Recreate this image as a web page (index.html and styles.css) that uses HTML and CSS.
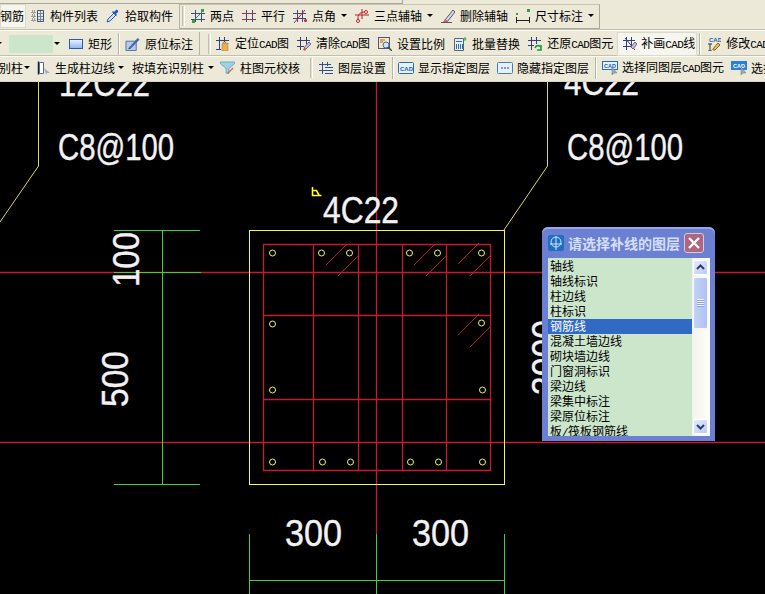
FILE: index.html
```html
<!DOCTYPE html>
<html lang="zh">
<head>
<meta charset="utf-8">
<title>CAD</title>
<link rel="stylesheet" href="styles.css">
</head>
<body>
<div class="page">
  <header class="bars">
    <div class="strip"></div>
    <div class="row row1">
      <div class="tb tb-first">
        <span class="tool on first">钢筋</span>
        <span class="tool"><svg class="ic" viewBox="0 0 14 14"><path d="M1 2h3v2H1zM1 6h3v2H1zM1 10h3v2H1z" fill="none" stroke="#456" stroke-dasharray="1 1"/><path d="M6.500 1.500h6v11h-6z" fill="#dfe8f2" stroke="#456"/><path d="M7 4.500h5M7 7.500h5M7 10.500h5M9.500 2v10" stroke="#789"/></svg>构件列表</span>
        <span class="tool pick"><svg class="ic" viewBox="0 0 14 14"><path d="M1 13l1-3 6-6 2 2-6 6z" fill="#cfe0f8" stroke="#2a5bb0"/><path d="M8 3l2-2c1-1 3 1 2 2l-2 2 1 1-1 1-4-4 1-1z" fill="#2458b8"/></svg>拾取构件</span>
      </div>
      <div class="tb tb-main">
        <i class="grip"></i>
        <span class="tool"><svg class="ic" viewBox="0 0 14 14"><path d="M4.500 1v12M10.500 1v12M0 4.500h14M0 10.500h14" stroke="#3b4a8c"/><path d="M1 13L13 1" stroke="#2f8a2f"/><path d="M1 11h3v3H1zM10 0h3v3h-3z" fill="#38a038"/></svg>两点</span>
        <span class="tool"><svg class="ic" viewBox="0 0 14 14"><path d="M4.500 1v12M10.500 1v12" stroke="#3b4a8c"/><path d="M0 4.500h14M0 10.500h14" stroke="#a83048"/></svg>平行</span>
        <span class="tool"><svg class="ic" viewBox="0 0 14 14"><path d="M4.500 1v12M9.500 1v12M0 4.500h13M0 9.500h13" stroke="#3b4a8c"/><path d="M1 14L12 1" stroke="#c02030"/><circle cx="12.500" cy="11.500" r="1.500" fill="#c02030"/></svg>点角<i class="arr"></i></span>
        <span class="tool"><svg class="ic" viewBox="0 0 14 14"><path d="M3 13V8.500C3 5 6 3 10 3M7 0v10M0 6h14" fill="none" stroke="#b82030"/><circle cx="3" cy="12" r="1.500" fill="#fff" stroke="#b82030"/><circle cx="11" cy="3" r="1.500" fill="#fff" stroke="#b82030"/></svg>三点辅轴<i class="arr"></i></span>
        <span class="tool"><svg class="ic" viewBox="0 0 14 14"><path d="M0 13.500h11" stroke="#556"/><path d="M4 11L12 1l2 2-8 10z" fill="#d8d8e8" stroke="#556"/><path d="M2 13l2-3 3 2-1 1z" fill="#c86a6a"/></svg>删除辅轴</span>
        <span class="tool"><svg class="ic" viewBox="0 0 14 14"><path d="M.5 8v6M13.500 8v6M0 11.500h14" stroke="#222"/><path d="M11 0h3v3h-3zM0 4h2v2H0z" fill="#35a035"/></svg>尺寸标注<i class="arr"></i></span>
      </div>
    </div>
    <div class="row row2">
      <div class="tb tb-a">
        <i class="arr arr-cut"></i>
        <span class="swatch"><i class="arr"></i></span>
        <span class="tool"><svg class="ic" viewBox="0 0 14 14"><defs><linearGradient id="rg" x1="0" y1="0" x2="0" y2="1"><stop offset="0" stop-color="#eef4ff"/><stop offset="1" stop-color="#8db4ee"/></linearGradient></defs><rect x="0.500" y="2.500" width="13" height="9" fill="url(#rg)" stroke="#2a5bb0"/></svg>矩形</span>
        <i class="vsep"></i>
        <span class="tool wide"><svg class="ic ic15" viewBox="0 0 15 15"><path d="M.5 4.500h11v10H.5z" fill="#b8cbe8" stroke="#4a6fa8"/><path d="M4 11L13 1l2 2-9 9z" fill="#3f6db0"/><path d="M3 13l1-2 2 1z" fill="#223"/></svg>原位标注</span>
      </div>
      <div class="tb tb-b">
        <i class="grip"></i>
        <span class="tool"><svg class="ic" viewBox="0 0 14 14"><path d="M3.500 0v12M8.500 0v5M0 3.500h13M0 12.500h5" stroke="#2f3f80"/><path d="M6 14V7h1V5h1v2h1V5h1v2h1V6h1v8z" fill="#e8b050" stroke="#a87020" stroke-width=".5"/></svg><span>定位<span class="lat">CAD</span>图</span></span>
        <span class="tool"><svg class="ic" viewBox="0 0 14 14"><path d="M3.500 0v13M9.500 0v7M0 3.500h13M0 9.500h7" stroke="#2f3f80"/><path d="M7 11l5-6 2 2-5 5z" fill="#cfc4d8" stroke="#667"/><path d="M6 13l1-2 2 1-1 2z" fill="#c85050"/></svg><span>清除<span class="lat">CAD</span>图</span></span>
        <span class="tool"><svg class="ic" viewBox="0 0 14 14"><rect x="0.500" y="0.500" width="11" height="11" fill="#f4e8c0" stroke="#557"/><path d="M2 3h5M2 5h3" stroke="#c06030"/><circle cx="8" cy="8" r="3" fill="#cfe4fa" stroke="#3a6fb0"/><path d="M10 10l4 4" stroke="#445" stroke-width="1.500"/></svg>设置比例</span>
        <span class="tool"><svg class="ic" viewBox="0 0 14 14"><path d="M1.500 1.500h9v12h-9z" fill="#e8eef0" stroke="#567"/><path d="M3 4h6v1H3zM3 7h1v5H3zM5 7h1v5H5zM7 7h1v5H7zM9 7h1v5H9z" fill="#27a"/><path d="M12 0v4M10.500 2h3" stroke="#3a3"/></svg>批量替换</span>
        <span class="tool"><svg class="ic" viewBox="0 0 14 14"><path d="M3.500 0v13M8.500 0v7M0 3.500h13M0 8.500h6" stroke="#2f3f80"/><path d="M7 11c1-3 4-3 6-1v-2v5h-4" fill="none" stroke="#1f9a3a" stroke-width="1.600"/></svg><span>还原<span class="lat">CAD</span>图元</span></span>
        <span class="tool on hl"><svg class="ic" viewBox="0 0 14 14"><path d="M3.500 0v13M8.500 0v10M0 3.500h12M0 9.500h9" stroke="#2f3f80"/><path d="M2 1l10 12" stroke="#2f3f80"/><path d="M8 10l4-5 2 2-4 5z" fill="#cfc4d8" stroke="#667"/></svg><span>补画<span class="lat">CAD</span>线</span></span>
        <i class="vsep vsep2"></i>
        <span class="tool"><svg class="ic" viewBox="0 0 14 14"><path d="M1 7h4M1 14h4M3 7v7" stroke="#333"/><path d="M6 12l5-6 2 2-5 5H6z" fill="#f0c850" stroke="#806020"/><text class="mini" x="2" y="5">CAD</text></svg><span>修改<span class="lat">CAD</span>图</span></span>
      </div>
    </div>
    <div class="row row3">
      <div class="tb tb-c">
        <span class="tool first cut">别柱<i class="arr arr3"></i></span>
        <span class="tool"><svg class="ic" viewBox="0 0 14 14"><path d="M1.500 .5v13" stroke="#123" stroke-width="1.500"/><path d="M2.500 1.500h4v11h-4z" fill="#fff" stroke="#56a"/><path d="M7 7l6 5-3 0-1 2z" fill="#aab"/></svg>生成柱边线<i class="arr arr3"></i></span>
        <span class="tool txt">按填充识别柱<i class="arr"></i></span>
        <span class="tool check"><svg class="ic ic15" viewBox="0 0 15 15"><path d="M0 1h15v2L9 8v5H6V8L0 3z" fill="#9fd0e8" stroke="#4a90b0" stroke-width=".7"/><path d="M7 13l6-6 1 1-6 6z" fill="#c87040"/></svg>柱图元校核</span>
      </div>
      <div class="tb tb-d">
        <i class="grip"></i>
        <span class="tool"><svg class="ic" viewBox="0 0 14 14"><path d="M3.500 1v12M8.500 1v4M0 3.500h12M0 9.500h14M6 6.500h8M6 12.500h8" stroke="#2f4f90"/></svg>图层设置</span>
        <i class="vsep vsep3"></i>
        <span class="tool"><svg class="ic ic16" viewBox="0 0 16 14"><rect x=".5" y="1.500" width="15" height="11" rx="1" fill="#e4f0fb" stroke="#2a6db0"/><text class="mini2" x="2" y="10">CAD</text></svg>显示指定图层</span>
        <span class="tool"><svg class="ic ic16" viewBox="0 0 16 14"><rect x=".5" y="1.500" width="15" height="11" rx="1" fill="#e4f0fb" stroke="#4a7db0"/><path d="M4 7h8" stroke="#89a" stroke-width="2" stroke-dasharray="2 1"/></svg>隐藏指定图层</span>
        <i class="vsep vsep4"></i>
        <span class="tool"><svg class="ic ic16" viewBox="0 0 16 14"><rect x=".5" y=".5" width="15" height="8" fill="#e4f0fb" stroke="#2a6db0"/><text class="mini3" x="2" y="7">CAD</text><path d="M10 6l0 8 2-2 3 0z" fill="#9ab" stroke="#678" stroke-width=".5"/></svg><span>选择同图层<span class="lat">CAD</span>图元</span></span>
        <span class="tool"><svg class="ic ic16" viewBox="0 0 16 14"><rect x="0" y="0" width="16" height="9" fill="#2a7fd8"/><text class="mini3 w" x="2" y="7">CAD</text><path d="M10 6l0 8 2-2 3 0z" fill="#9ab" stroke="#678" stroke-width=".5"/></svg>选择同图层</span>
      </div>
    </div>
  </header>

  <main class="stage">
    <svg class="draw" viewBox="0 82 765 512" width="765" height="512">
      <g class="red">
        <path d="M0 272.500H765M0 442.500H765M376.500 82V534"/>
        <path d="M263.500 244.500H490.500V470.500H263.500ZM263.500 315.500H490.500M263.500 399.500H490.500M313.500 244.500V470.500M358.500 244.500V470.500M402.500 244.500V470.500M446.500 244.500V470.500"/>
        <path class="diag" d="M326 265L346 245M338 276L358 256M414 265L434 245M426 276L446 256M458 264L479 243M470 276L490 256M458 335L479 314M470 347L490 327"/>
      </g>
      <g class="yel">
        <path class="thin" d="M38.500 82V166L0 222M547.500 82V166L504 230"/>
        <rect class="crisp" x="249.500" y="230.500" width="255" height="254"/>
        <circle cx="272.500" cy="253" r="3"/><circle cx="321.500" cy="253" r="3"/><circle cx="349.500" cy="253" r="3"/><circle cx="409.500" cy="253" r="3"/><circle cx="437.500" cy="253" r="3"/><circle cx="481.500" cy="253" r="3"/>
        <circle cx="272.500" cy="324" r="3"/><circle cx="481.500" cy="323" r="3"/>
        <circle cx="272.500" cy="390" r="3"/><circle cx="482.500" cy="390" r="3"/>
        <circle cx="272.500" cy="462" r="3"/><circle cx="322.500" cy="462" r="3"/><circle cx="350.500" cy="462" r="3"/><circle cx="410.500" cy="462" r="3"/><circle cx="438.500" cy="462" r="3"/><circle cx="482.500" cy="462" r="3"/>
        <path class="mark" d="M312.500 187V195.500H321.500M312.500 190.500H316.500L319 195"/>
      </g>
      <g class="grn">
        <path class="crisp" d="M162.500 230V484M114 230.500H200M114 272.500H201M114 484.500H200"/>
        <path class="crisp" d="M249.500 534V594M376.500 534V594M504.500 534V594M249 580.500H505"/>
      </g>
      <g class="lbl">
        <text x="59" y="96" textLength="91" lengthAdjust="spacingAndGlyphs">12C22</text>
        <text x="58" y="160" textLength="116" lengthAdjust="spacingAndGlyphs">C8@100</text>
        <text x="323" y="223" textLength="76" lengthAdjust="spacingAndGlyphs">4C22</text>
        <text x="564" y="95" textLength="75" lengthAdjust="spacingAndGlyphs">4C22</text>
        <text x="567" y="160" textLength="116" lengthAdjust="spacingAndGlyphs">C8@100</text>
        <text x="285" y="546" textLength="57" lengthAdjust="spacingAndGlyphs">300</text>
        <text x="412" y="546" textLength="57" lengthAdjust="spacingAndGlyphs">300</text>
        <text transform="translate(139 287) rotate(-90)" textLength="55" lengthAdjust="spacingAndGlyphs">100</text>
        <text transform="translate(128 407) rotate(-90)" textLength="56" lengthAdjust="spacingAndGlyphs">500</text>
        <text transform="translate(558 395) rotate(-90)" textLength="75" lengthAdjust="spacingAndGlyphs">3000</text>
      </g>
    </svg>

    <section class="dialog">
      <div class="title">
        <svg class="appic" viewBox="0 0 16 16"><rect width="16" height="16" rx="2" fill="#1f6fc0"/><circle cx="8" cy="7" r="5" fill="none" stroke="#cfe4fa"/><path d="M8 1v14M2 9h12" stroke="#cfe4fa"/></svg>
        <span class="ttext">请选择补线的图层</span>
        <button class="close" type="button">
          <svg viewBox="0 0 20 20" width="20" height="20"><path d="M5 5L15 15M15 5L5 15" stroke="#fff" stroke-width="2.400"/></svg>
        </button>
      </div>
      <div class="body">
        <ul class="list">
          <li>轴线</li>
          <li>轴线标识</li>
          <li>柱边线</li>
          <li>柱标识</li>
          <li class="sel">钢筋线</li>
          <li>混凝土墙边线</li>
          <li>砌块墙边线</li>
          <li>门窗洞标识</li>
          <li>梁边线</li>
          <li>梁集中标注</li>
          <li>梁原位标注</li>
          <li>板<span class="lat">/</span>筏板钢筋线</li>
        </ul>
        <div class="scroll">
          <span class="sbtn"><svg viewBox="0 0 15 15" width="15" height="15"><path d="M4 9l3.500-3.500L11 9" fill="none" stroke="#2b3f78" stroke-width="2"/></svg></span>
          <span class="thumb"><i></i></span>
          <span class="sbtn bottom"><svg viewBox="0 0 15 15" width="15" height="15"><path d="M4 6l3.500 3.500L11 6" fill="none" stroke="#2b3f78" stroke-width="2"/></svg></span>
        </div>
      </div>
    </section>
  </main>
</div>
</body>
</html>
```
FILE: styles.css
```css
* { box-sizing: border-box; }
html, body { margin: 0; padding: 0; }
body { background: #000; font-family: "Noto Sans CJK SC", "Liberation Sans", sans-serif; font-size: 12px; color: #000; }
.page { width: 765px; height: 594px; overflow: hidden; }

/* toolbars */
.bars { height: 82px; background: #ece9d8; border-bottom: 1px solid #d8d4c4; overflow: hidden; }
.strip { height: 4px; width: 403px; border-bottom: 1px solid #aca899; border-right: 1px solid #aca899; }
.row { display: flex; height: 26px; white-space: nowrap; }
.row1 { height: 25px; }
.row2, .row3 { border-top: 1px solid #c4c0ae; box-shadow: inset 0 1px 0 #fbfaf4; }
.row2 { padding-top: 2px; }
.row3 { padding-bottom: 2px; }
.tb { display: flex; align-items: center; gap: 8px; height: 100%; flex: none; }
.tool { display: inline-flex; align-items: center; gap: 5px; line-height: 16px; flex: none; }
.lat { font-family: "Liberation Mono", monospace; font-size: 11px; letter-spacing: -0.6px; }
.ic { width: 14px; height: 14px; flex: none; display: block; }
.ic15 { width: 15px; }
.ic16 { width: 16px; height: 14px; margin-right: -1px; }
.arr { display: inline-block; width: 0; height: 0; border: 3px solid transparent; border-top: 3px solid #000; border-bottom-width: 0; flex: none; }
.grip { display: block; width: 3px; height: 20px; border-left: 1px solid #c4c0ae; border-right: 1px solid #fff; background: #e2dfcf; flex: none; }
.vsep { display: block; width: 2px; height: 22px; border-left: 1px solid #b8b4a2; border-right: 1px solid #fff; flex: none; }

.tb-first { width: 180px; border-right: 1px solid #b8b4a2; gap: 5px; padding-bottom: 2px; }
.pick { margin-left: 3px; }
.on { background: #f6f5ee; box-shadow: inset 0 0 0 1px #dcdacb; height: 24px; }
.first { padding-right: 2px; }
.tb-main { width: 420px; padding-left: 2px; padding-bottom: 2px; border-right: 1px solid #aca899; border-bottom: 1px solid #aca899; border-top: 1px solid #c8c4b2; }
.tb-main .grip { margin-right: -2px; }

.swatch { display: flex; align-items: center; justify-content: flex-end; padding-right: 3px; width: 54px; height: 18px; margin-left: 1px; background: linear-gradient(90deg, #cce6cc 82%, #e6eed8 82%); }
.arr-cut { margin-left: -4px; }
.tb-a { width: 200px; border-right: 1px solid #b8b4a2; gap: 6px; }
.wide { margin-left: -1px; }
.tb-b { padding-left: 8px; }
.tb-b .grip { margin-right: -3px; }
.hl { margin-left: -4px; padding: 0 2px 0 6px; }
.hl .ic { margin-right: -1px; }
.vsep2 { margin: 0 -2px 0 -6px; }
.tb-c { width: 306px; gap: 8px; }
.tb-c .tool { gap: 4px; }
.tb-c .cut { margin-left: -1px; margin-right: -1px; padding: 0; }
.tb-c .cut .arr { margin-left: -3px; }
.arr3 { margin-left: -1px; }
.tb-c .check { gap: 5px; margin-left: -2px; }
.tb-d { padding-left: 4px; gap: 7px; }
.tb-d .tool { gap: 5px; }
.tb-d .grip { margin-right: -1px; }
.vsep3 { margin: 0 -3px 0 -1px; }
.vsep4 { margin: 0 -2px 0 -1px; }

.mini, .mini2, .mini3 { font-family: "Liberation Sans", sans-serif; font-weight: 700; fill: #1f5fb0; }
.mini, .mini2 { font-size: 6px; }
.mini3 { font-size: 5.500px; }
.mini3.w { fill: #fff; }

/* drawing */
.stage { position: relative; display: block; width: 765px; height: 512px; background: #000; overflow: hidden; }
.draw { display: block; }
.draw path, .draw rect, .draw circle { fill: none; stroke-width: 1; }
.draw .crisp { shape-rendering: crispEdges; }
.draw .red path { stroke: #c41c2c; stroke-width: 1.300; }
.draw .red .diag { stroke-width: 1; }
.yel path, .yel rect, .yel circle { stroke: #f4f45c; }
.yel .thin { stroke: #d8d860; }
.draw .yel .mark { stroke: #ffff20; stroke-width: 1.600; }
.grn path { stroke: #3ed03e; }
.lbl text { font-family: "Liberation Sans", sans-serif; font-size: 36px; fill: #f2f2f2; stroke: #f2f2f2; stroke-width: .4px; }

/* dialog */
.dialog { position: absolute; left: 542px; top: 145px; width: 173px; height: 214px; display: flex; flex-direction: column; padding: 0 5px 5px 6px; background: #6b80d2; border-radius: 6px 6px 0 0; box-shadow: inset 0 2px 0 #93a7ee; }
.title { height: 31px; display: flex; align-items: center; flex: none; }
.appic { width: 16px; height: 16px; flex: none; display: block; }
.ttext { margin-left: 4px; font-size: 14px; font-weight: 700; line-height: 16px; color: #d5def8; white-space: nowrap; width: 116px; flex: none; }
.close { width: 20px; height: 20px; padding: 0; border: 1px solid #d8c8d8; border-radius: 3px; background: #b0667e; display: block; flex: none; }
.close svg { display: block; margin: -1px; }
.body { flex: 1; min-height: 0; display: flex; overflow: hidden; }
.list { list-style: none; margin: 0; padding: 1px 0 0; width: 144px; background: #cce6cc; overflow: hidden; flex: none; }
.list li { height: 15px; line-height: 13px; padding-left: 2px; white-space: nowrap; }
.list .sel { background: #316ac5; color: #fff; }
.scroll { position: relative; flex: 1; background: linear-gradient(90deg, #f4f3ea, #fefefb); padding: 2px 2px 2px 1px; display: flex; flex-direction: column; }
.sbtn { display: block; width: 15px; height: 15px; border-radius: 2px; background: linear-gradient(135deg, #e8eefc, #b8c8f4); box-shadow: inset 0 0 0 1px #fff; flex: none; }
.sbtn svg { display: block; }
.bottom { margin-top: auto; }
.thumb { display: flex; align-items: center; justify-content: center; width: 15px; height: 52px; margin-top: 2px; border-radius: 2px; border: 1px solid #f4f7ff; background: linear-gradient(90deg, #c2d2f8, #b0c2f4); flex: none; }
.thumb i { display: block; width: 7px; height: 8px; background: repeating-linear-gradient(180deg, #f0f4ff 0, #f0f4ff 1px, #8ea4e0 1px, #8ea4e0 2px); }
```
